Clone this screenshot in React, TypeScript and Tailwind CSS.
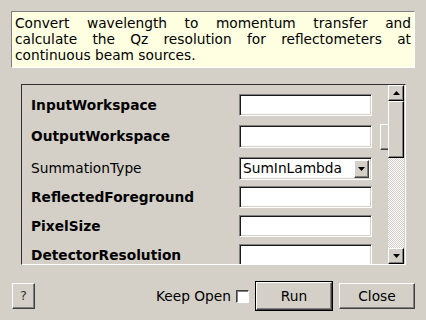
import React from "react";

const raised =
  "bg-[#d4d0c8] border border-t-white border-l-white border-r-[#404040] border-b-[#404040] shadow-[inset_-1px_-1px_0_#808080]";
const sunken =
  "bg-white border border-t-[#808080] border-l-[#808080] border-r-white border-b-white shadow-[inset_1px_1px_0_#1a1a1a,inset_-1px_-1px_0_#d4d0c8]";

function Field() {
  return <div className={`w-[133px] h-full shrink-0 ${sunken}`} />;
}

function Row({
  label,
  bold = true,
  h,
  mt,
  children,
}: {
  label: string;
  bold?: boolean;
  h: number;
  mt: number;
  children?: React.ReactNode;
}) {
  return (
    <div
      className="flex items-center shrink-0"
      style={{ height: h, marginTop: mt }}
    >
      <div className={`w-[217px] shrink-0 pl-[9px] text-[13.75px] text-black whitespace-nowrap ${bold ? "font-bold" : ""}`}>
        {label}
      </div>
      {children ?? <Field />}
    </div>
  );
}

function Tri({ up }: { up?: boolean }) {
  return (
    <svg width="7" height="4" viewBox="0 0 7 4">
      {up ? <path d="M3.5 0 L7 4 L0 4 Z" fill="#000" /> : <path d="M0 0 L7 0 L3.5 4 Z" fill="#000" />}
    </svg>
  );
}

export default function App() {
  return (
    <div
      className="w-[426px] h-[320px] bg-[#d4d0c8] flex flex-col overflow-hidden"
      style={{ fontFamily: "'DejaVu Sans', sans-serif" }}
    >
      {/* description */}
      <div className="ml-[11px] mt-[11px] w-[404px] h-[57px] bg-[#ffffe1] border border-t-[#808080] border-l-[#808080] border-r-white border-b-white pl-[3px] pr-[3px] pt-[3px] text-[13.75px] leading-[16px] text-black text-justify">
        Convert wavelength to momentum transfer and calculate the Qz resolution for reflectometers at continuous beam sources.
      </div>

      {/* scroll frame */}
      <div className="ml-[21px] mt-[16px] w-[385px] h-[181px] border border-t-[#303030] border-l-[#303030] border-r-white border-b-white flex">
        <div className="w-[366px] shrink-0 h-full overflow-hidden flex flex-col pt-[9px]">
          <Row label="InputWorkspace" h={22} mt={0} />
          <Row label="OutputWorkspace" h={23} mt={9}>
            <Field />
            <div className={`ml-[8px] w-[40px] h-[26px] shrink-0 ${raised}`} />
          </Row>
          <Row label="SummationType" bold={false} h={23} mt={9}>
            <div className={`w-[133px] h-full shrink-0 flex items-center pl-[3px] pr-[2px] ${sunken}`}>
              <span className="flex-1 text-[13.75px] text-black">SumInLambda</span>
              <div className={`w-[15px] h-[18px] flex items-center justify-center ${raised}`}>
                <Tri />
              </div>
            </div>
          </Row>
          <Row label="ReflectedForeground" h={22} mt={6} />
          <Row label="PixelSize" h={22} mt={7} />
          <Row label="DetectorResolution" h={22} mt={7} />
        </div>
        {/* scrollbar */}
        <div className="w-[16px] shrink-0 h-full flex flex-col">
          <div className={`h-[16px] shrink-0 flex items-center justify-center ${raised} border-r-black border-b-black`}>
            <Tri up />
          </div>
          <div className={`h-[57px] shrink-0 ${raised} border-r-black border-b-black`} />
          <div className="flex-1 bg-[repeating-conic-gradient(#ffffff_0%_25%,#d4d0c8_0%_50%)] bg-[length:2px_2px]" />
          <div className={`h-[16px] shrink-0 flex items-center justify-center ${raised} border-r-black border-b-black`}>
            <Tri />
          </div>
        </div>
      </div>

      {/* bottom */}
      <div className="mt-[16px] flex items-center pl-[12px] h-[30px]">
        <div className={`w-[23px] h-[26px] flex items-center justify-center text-[13px] text-[#333] ${raised}`}>
          ?
        </div>
        <div className="ml-auto flex items-center">
          <span className="text-[13.75px] text-black">Keep Open</span>
          <div className="ml-[5px] w-[13px] h-[13px] bg-white border border-t-[#404040] border-l-[#404040] border-r-white border-b-white shadow-[inset_1px_1px_0_#808080]" />
          <div className="ml-[6px] w-[78px] h-[30px] border border-black">
            <div className={`w-full h-full flex items-center justify-center text-[13.75px] text-black ${raised}`}>
              Run
            </div>
          </div>
          <div className={`ml-[6px] mr-[11px] w-[76px] h-[26px] flex items-center justify-center text-[13.75px] text-black ${raised}`}>
            Close
          </div>
        </div>
      </div>
    </div>
  );
}
